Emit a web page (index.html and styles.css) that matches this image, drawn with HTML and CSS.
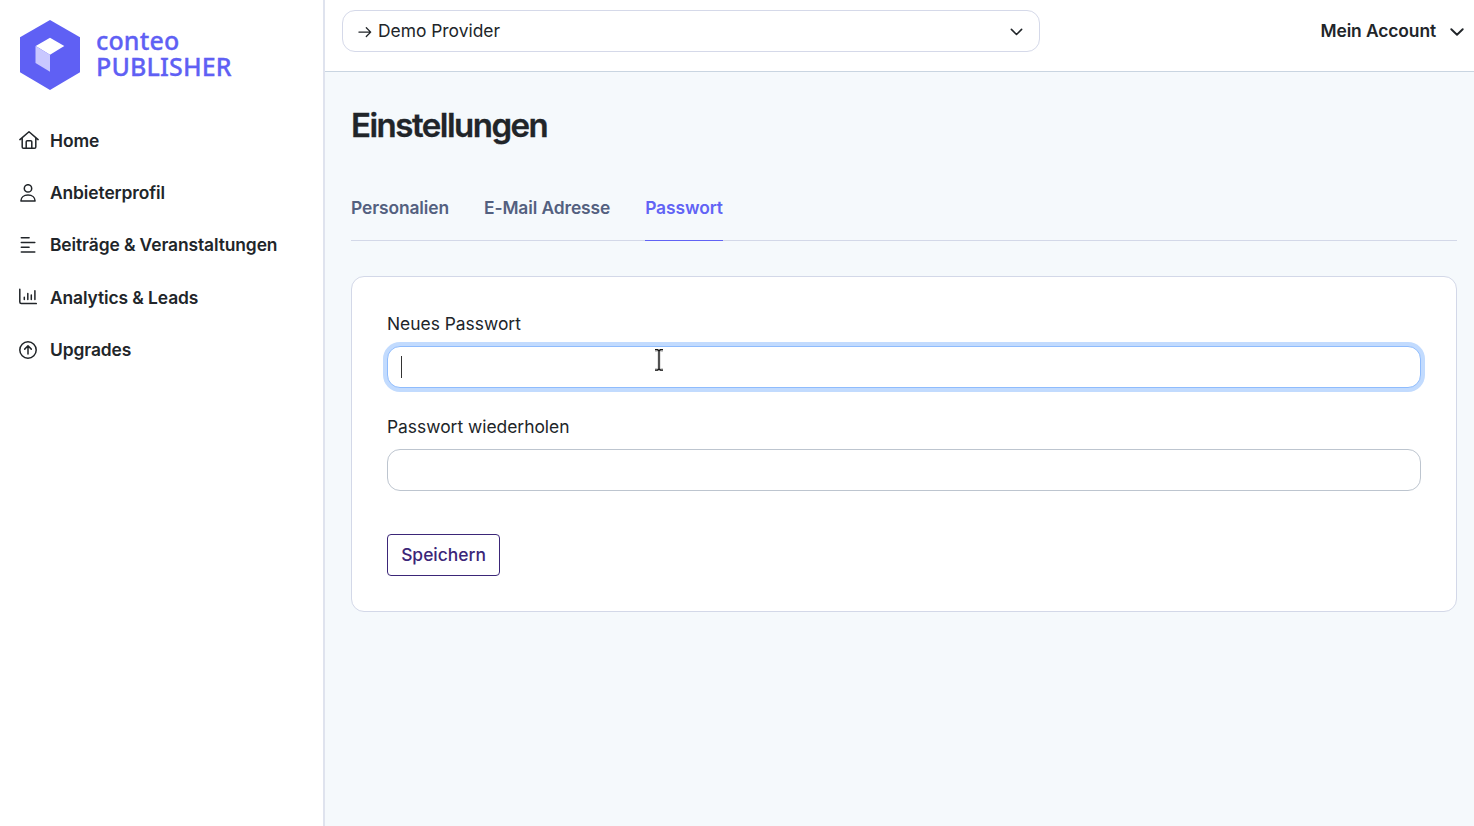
FILE: index.html
```
<!DOCTYPE html>
<html lang="de">
<head>
  <meta charset="UTF-8">
  <meta name="viewport" content="width=device-width, initial-scale=1.0">
  <title>Einstellungen - conteo PUBLISHER</title>
  <link rel="stylesheet" href="styles.css">
</head>
<body>
  <aside class="sidebar">
    <a class="logo" href="#">
      <svg class="logo-mark" viewBox="0 0 60 70" width="60" height="70">
        <path fill="#5f60f4" d="M30 0l30 17.3v35L30 70 0 52.3v-35z"/>
        <path fill="#fff" d="M30 17.8l14.3 8.2L30 34.7 15.7 26z"/>
        <path fill="#c9c8ff" d="M15.5 26L30 34.7v17L15.5 43z"/>
      </svg>
      <span class="logo-text">
        <span class="logo-top">conteo</span>
        <span class="logo-bottom">PUBLISHER</span>
      </span>
    </a>

    <nav class="menu">
      <a class="menu-item" href="#">
        <svg class="menu-icon home" viewBox="0 0 20 20" fill="none" stroke="currentColor" stroke-width="1.5" stroke-linejoin="round" stroke-linecap="round">
          <path d="M.9 9.6L10 1.8l9.1 7.8M3.2 8v8.9c0 .8.5 1.3 1.3 1.3h11c.8 0 1.3-.5 1.3-1.3V8M7.2 18v-6.2c0-.7.4-1.1 1.1-1.1h3.4c.7 0 1.1.4 1.1 1.1V18"/>
        </svg>
        Home
      </a>
      <a class="menu-item" href="#">
        <svg class="menu-icon" viewBox="0 0 18 18" fill="none" stroke="currentColor" stroke-width="1.5" stroke-linejoin="round">
          <circle cx="9" cy="4.4" r="3.7"/>
          <path d="M1.9 17c0-3.5 2.8-5.9 7.1-5.9s7.1 2.4 7.1 5.9z"/>
        </svg>
        Anbieterprofil
      </a>
      <a class="menu-item" href="#">
        <svg class="menu-icon" viewBox="0 0 18 18" fill="none" stroke="currentColor" stroke-width="1.5" stroke-linecap="round">
          <path d="M2.3 1.8h7.8M2.3 6.5h13.5M2.3 11.2h7.8M2.3 16h13.5"/>
        </svg>
        Beiträge &amp; Veranstaltungen
      </a>
      <a class="menu-item" href="#">
        <svg class="menu-icon" viewBox="0 0 18 18" fill="none" stroke="currentColor" stroke-width="1.5" stroke-linecap="round">
          <path d="M.8 1.2v12.9c0 .9.6 1.5 1.5 1.5h15M5.3 9.3v2.3M8.8 5.5v6.1M12.3 7v4.6M15.9 2.7v8.9"/>
        </svg>
        Analytics &amp; Leads
      </a>
      <a class="menu-item" href="#">
        <svg class="menu-icon" viewBox="0 0 18 18" fill="none" stroke="currentColor" stroke-width="1.5" stroke-linecap="round" stroke-linejoin="round">
          <circle cx="9" cy="9" r="8.2"/>
          <path d="M9 13V5M5.7 8.1L9 4.8l3.3 3.3"/>
        </svg>
        Upgrades
      </a>
    </nav>
  </aside>

  <div class="page">
    <header class="topbar">
      <div class="provider">
        <svg width="14" height="14" viewBox="0 0 15 14" fill="none" stroke="currentColor" stroke-width="1.4" stroke-linecap="round" stroke-linejoin="round">
          <path d="M1 8.2h12.6M8.9 3.5l4.7 4.7-4.7 4.7"/>
        </svg>
        <span class="provider-name">Demo Provider</span>
        <svg class="chevron" width="13" height="8" viewBox="0 0 14 8" fill="none" stroke="currentColor" stroke-width="1.7" stroke-linecap="round" stroke-linejoin="round">
          <path d="M1.5 1.2L7 6.7l5.5-5.5"/>
        </svg>
      </div>
      <a class="account" href="#">
        <span class="account-name">Mein Account</span>
        <svg class="account-arrow" width="14" height="8" viewBox="0 0 14 8" fill="none" stroke="currentColor" stroke-width="1.9" stroke-linecap="round" stroke-linejoin="round">
          <path d="M1.3 1.2L7 6.7l5.7-5.5"/>
        </svg>
      </a>
    </header>

    <main class="content">
      <h1>Einstellungen</h1>

      <nav class="tabs">
        <a class="tab" href="#">Personalien</a>
        <a class="tab" href="#">E-Mail Adresse</a>
        <a class="tab active" href="#">Passwort</a>
      </nav>

      <form class="card">
        <label class="label" for="password">Neues Passwort</label>
        <div class="field">
          <input class="input focused" type="password" id="password">
          <span class="caret"></span>
          <svg class="pointer" width="12" height="24" viewBox="0 0 12 24" fill="none">
            <path stroke="#ccc" stroke-width="3" d="M2 2.5h3l1 1 1-1h3M6 3v18M2 21.5h3l1-1 1 1h3"/>
            <path stroke="#111" stroke-width="1.3" d="M2 1.7h2.6L6 3l1.4-1.3H10M6 3v18M2 22.1h2.6L6 20.8l1.4 1.3H10"/>
          </svg>
        </div>
        <label class="label" for="repeat">Passwort wiederholen</label>
        <div class="field">
          <input class="input" type="password" id="repeat">
        </div>
        <button class="save" type="button">Speichern</button>
      </form>
    </main>
  </div>
</body>
</html>
```
FILE: styles.css
```
* {
  box-sizing: border-box;
}

body {
  display: flex;
  height: 100vh;
  margin: 0;
  overflow: hidden;
  background-color: #fff;
  color: #212529;
  font-family: Inter, "Liberation Sans", sans-serif;
  font-size: 17.4px;
}

a {
  color: inherit;
  text-decoration: none;
}

svg {
  display: block;
  flex: none;
}

/* Sidebar */
.sidebar {
  width: 325px;
  flex: none;
  padding: 20px 0 0 20px;
  border-right: 2px solid #dfe3ee;
}

.logo {
  display: flex;
  gap: 16px;
  height: 94px;
  color: #5f60f4;
  font-family: "Noto Sans", sans-serif;
  font-weight: 500;
  -webkit-text-stroke: 0.3px #5f60f4;
}

.logo-mark {
  margin-top: -0.5px;
}

.logo-text {
  padding-top: 7px;
}

.logo-top,
.logo-bottom {
  display: block;
  height: 26px;
  line-height: 26px;
  font-size: 25px;
  letter-spacing: 0.15px;
}

.menu-item {
  display: flex;
  align-items: center;
  gap: 13px;
  height: 52.4px;
  margin-left: -1px;
  font-weight: 600;
  letter-spacing: -0.09px;
}

.menu-icon {
  width: 18px;
  height: 18px;
}

.home {
  width: 20px;
  height: 20px;
  margin-right: -2px;
}

/* Right side */
.page {
  flex: 1;
  background-color: #f5f9fc;
}

.topbar {
  display: flex;
  align-items: flex-start;
  justify-content: space-between;
  height: 72px;
  padding: 10px 10px 0 17px;
  background-color: #fff;
  border-bottom: 1px solid #c9d5e1;
}

.provider {
  display: flex;
  align-items: center;
  gap: 6px;
  width: 698px;
  height: 42px;
  padding: 0 16px 1px 15px;
  border: 1px solid #d5d9e9;
  border-radius: 13px;
}

.chevron {
  margin-top: 2px;
  margin-left: auto;
}

.account {
  display: flex;
  align-items: center;
  gap: 14px;
  height: 42px;
  padding-bottom: 1px;
  font-weight: 600;
  letter-spacing: -0.09px;
}

.account-arrow {
  margin-top: 3px;
}

.content {
  padding: 32px 17px 0 26px;
}

h1 {
  margin: 0;
  font-size: 33px;
  line-height: 42px;
  font-weight: 600;
  letter-spacing: -1.5px;
  -webkit-text-stroke: 0.3px #212529;
}

.tabs {
  display: flex;
  gap: 35px;
  height: 66px;
  margin: 29px 0 35px;
  border-bottom: 1px solid #d3d8e8;
  color: #53607f;
  font-weight: 600;
  letter-spacing: -0.1px;
}

.tab {
  height: 66px;
  line-height: 66px;
}

.tab.active {
  color: #6163f5;
  border-bottom: 1px solid #6163f5;
}

.card {
  height: 336px;
  padding: 34px 35px 35px;
  background-color: #fff;
  border: 1px solid #d3d8e8;
  border-radius: 13px;
}

.label {
  display: block;
  height: 35px;
  line-height: 26px;
}

.field {
  position: relative;
  height: 42px;
  margin-bottom: 26px;
}

.input {
  display: block;
  width: 100%;
  height: 42px;
  padding: 6px 13px;
  border: 1px solid #bdc5cf;
  border-radius: 13px;
  outline: none;
  font: inherit;
}

.focused {
  border-color: #8fbcfd;
  box-shadow: 0 0 0 4px #c2dbfe;
}

.caret {
  position: absolute;
  left: 14px;
  top: 10px;
  width: 1px;
  height: 22px;
  background-color: #333;
}

/* I-beam over the field */
.pointer {
  position: absolute;
  left: 266px;
  top: 2px;
}

.save {
  display: block;
  width: 113px;
  height: 42px;
  margin-top: 43px;
  padding: 0 0 2px;
  background-color: #fff;
  border: 1px solid #3b2678;
  border-radius: 4px;
  color: #3b2678;
  font: inherit;
  font-weight: 500;
}
```
